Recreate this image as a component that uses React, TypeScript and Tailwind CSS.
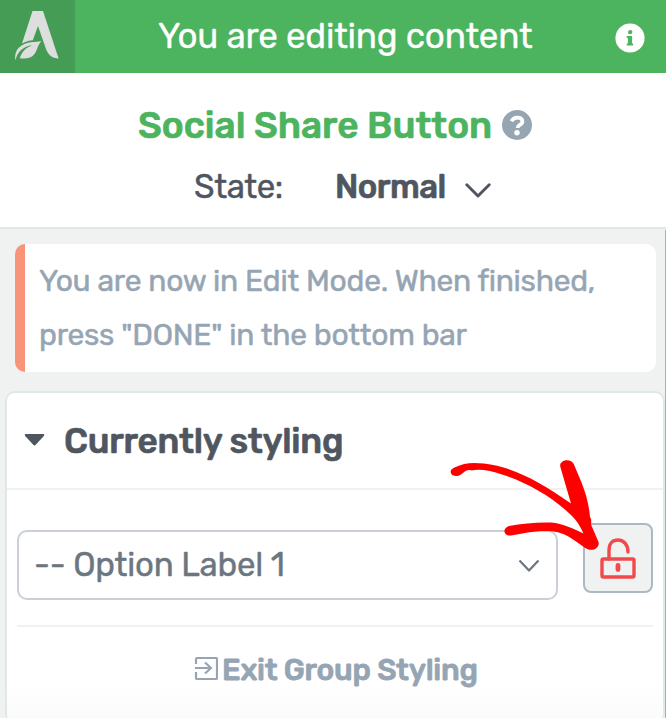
import React from "react";

function Logo() {
  return (
    <svg width="75" height="73" viewBox="0 0 75 73" fill="#dedede">
      <path d="M32.5 11H43L58.6 58.5C52 58.5 48 54.5 46 49L38 26L32.8 40.3C29 40.6 25.5 41.7 22 43.5Z" />
      <path d="M15.4 60.5C14 52 18 46.8 25 43.8C30.500 41.500 36 42.500 41.500 41C37.500 45 37.500 50 34.500 54C31 58.500 26 59 19.800 58.200C22 51.500 26 47.500 32.500 45.200C23 46.200 17.500 51.500 15.400 60.500Z" />
    </svg>
  );
}

function Header() {
  return (
    <header className="flex h-[73px] items-center bg-[#4cb35e] text-white">
      <div className="h-[73px] w-[75px] shrink-0 bg-[#459d55]">
        <Logo />
      </div>
      <h1 className="ml-[83px] w-[457px] whitespace-nowrap text-[35px] font-[430] leading-[73px] tracking-[-0.24px] [-webkit-text-stroke:0.3px]">
        You are editing content
      </h1>
      <svg width="30" height="30" viewBox="0 0 30 30" className="mt-[3px] shrink-0">
        <circle cx="15" cy="15" r="14.6" fill="#fff" />
        <path
          fill="#4cb35e"
          d="M15.300 7Q17.600 7 17.400 9.100Q17.200 11.300 15 11.300Q12.900 11.300 13 9.200Q13.200 7 15.300 7ZM11.800 13H17.100V20.600H18.100V22.600H11.800V20.600H12.900V15H11.800Z"
        />
      </svg>
    </header>
  );
}

function TitleBar() {
  return (
    <section className="h-[156px] border-b-2 border-[#dee8e9] bg-white text-[#50565f]">
      <div className="flex items-center pl-[138px] pt-[31px]">
        <h2 className="w-[364px] whitespace-nowrap text-[37px] font-medium leading-[42px] text-[#4cb35e] [-webkit-text-stroke:0.7px]">
          Social Share Button
        </h2>
        <svg width="30" height="30" viewBox="0 0 30 30">
          <circle cx="15" cy="15" r="15" fill="#96a5b2" />
          <path d="M9.500 11.200C10.700 8.700 12.500 7.600 15.200 7.600C18.500 7.600 20.400 9.100 20.400 11.600C20.400 15.200 15.500 14.700 15.500 18" fill="none" stroke="#fff" strokeWidth="3.800" />
          <circle cx="15" cy="22.700" r="2.700" fill="#fff" />
        </svg>
      </div>
      <div className="flex items-center pl-[194px] pt-[20px] text-[33px] leading-[42px]">
        <span className="w-[141px] whitespace-nowrap font-[430] tracking-[-0.4px] [-webkit-text-stroke:0.4px]">State:</span>
        <span className="w-[130px] whitespace-nowrap font-medium tracking-[-0.55px] [-webkit-text-stroke:0.7px]">Normal</span>
        <svg width="26" height="16" viewBox="0 0 26 16" className="mt-[8px]">
          <path d="M1.800 1.800L13 13L24.200 1.800" fill="none" stroke="#4e5560" strokeWidth="2.900" strokeLinecap="round" strokeLinejoin="round" />
        </svg>
      </div>
    </section>
  );
}

function Notice() {
  return (
    <div className="ml-[15px] mt-[15px] h-[128px] w-[641px] overflow-hidden rounded-[10px] border-l-[10px] border-[#f79479] bg-white pl-[14px] pt-[10px] text-[30px] font-[430] leading-[54px] text-[#95a5b3] [-webkit-text-stroke:0.5px]">
      <p className="whitespace-nowrap tracking-[-0.25px]">You are now in Edit Mode. When finished,</p>
      <p className="whitespace-nowrap tracking-[-0.25px]">press "DONE" in the bottom bar</p>
    </div>
  );
}

function RedArrow() {
  return (
    <svg className="absolute left-[440px] top-[450px]" width="170" height="110" viewBox="0 0 170 110" fill="#f00">
      <path d="M14.500 17.500C24 13 31 12.300 44 13.500C73 17 99 31 131 53.500L120.500 17.500C118 10 131 7.500 134 14.500C142 34 148 45 150 67C152 70 151 72 151 74.500L158.500 92C160 98 152 103 144.500 97.500C132 88.500 124 81.500 108 81C94 80.500 84 83.500 71 85.500C64 86.500 61.500 78.500 69 76C83 73.500 97 72 111 72.500C123 73.500 134 79 143.500 83.500C140 76 137 71 132 66C113 47 86 32 62 24.500C51 21 40 18.500 31.500 20.500C27.500 19 25 21.500 21 24.500C12 29.500 6.500 20.500 14.500 17.500Z" />
    </svg>
  );
}

function StylingPanel() {
  return (
    <section className="ml-[5px] mt-[19px] h-[327px] w-[660px] rounded-t-[10px] rounded-b-[4px] border-2 border-b-0 border-[#dee8e9] bg-gradient-to-b from-white from-90% to-[#fbfbfb]">
      <div className="flex h-[97px] items-center border-b-2 border-[#f0f2f2] pl-[17px] text-[#50565f]">
        <svg width="21" height="12" viewBox="0 0 22 12" preserveAspectRatio="none" className="-mt-px">
          <path d="M1.500 0H20.500Q22 .6 20.800 2L12.300 10.800Q11 12 9.700 10.800L1.200 2Q0 .6 1.500 0Z" fill="#50565f" />
        </svg>
        <h3 className="ml-[19px] whitespace-nowrap text-[35px] font-medium leading-[42px] tracking-[-0.25px] [-webkit-text-stroke:0.7px]">
          Currently styling
        </h3>
      </div>
      <div className="ml-[10px] flex h-[137px] w-[636px] border-b-2 border-[#f0f2f2] pt-[33px]">
        <div className="mt-[7px] flex h-[70px] w-[541px] shrink-0 items-center justify-between rounded-[10px] border-2 border-[#cbd0d7] pl-[15px] pr-[16px] text-[33px] text-[#6c7681]">
          <span className="whitespace-nowrap font-[430] leading-[60px] tracking-[-0.25px] [-webkit-text-stroke:0.4px]">-- Option Label 1</span>
          <svg width="22" height="14" viewBox="0 0 22 14" className="mt-[2px]">
            <path d="M1.500 1.500L11 11.500L20.500 1.500" fill="none" stroke="#6c7681" strokeWidth="2.200" strokeLinejoin="round" />
          </svg>
        </div>
        <button className="ml-[25px] h-[70px] w-[70px] shrink-0 rounded-[8px] border-2 border-[#acb8c3] bg-[#f0f2f2]">
          <svg width="66" height="66" viewBox="0 0 66 66" fill="none" stroke="#f04a4d" strokeWidth="3.400">
            <rect x="17" y="34" width="32" height="18" rx="1.500" />
            <path d="M24 34V25C24 18 28 15 33 15C39 15 43 20 43 27" strokeLinecap="round" />
            <path d="M33 40.500V44.500" strokeWidth="4.800" strokeLinecap="round" />
          </svg>
        </button>
      </div>
      <div className="flex items-center pl-[187px] pt-[23px] text-[#95a5b3]">
        <svg width="24" height="24" viewBox="0 0 24 24" fill="none" stroke="#95a5b3" strokeWidth="2.200" className="-mt-[4px]">
          <path d="M2 8V3Q2 2 3 2H22Q23 2 23 3V22Q23 23 22 23H3Q2 23 2 22V16M1 12H17M11 6.500L17 12L11 17.500" />
        </svg>
        <span className="ml-[4px] whitespace-nowrap text-[30px] font-medium leading-[40px] tracking-[-0.28px] [-webkit-text-stroke:0.8px]">Exit Group Styling</span>
      </div>
    </section>
  );
}

export default function App() {
  return (
    <main className="relative h-[718px] w-[666px] overflow-hidden bg-[#f0f2f1] font-['Rubik','Roboto',sans-serif]">
      <Header />
      <TitleBar />
      <Notice />
      <StylingPanel />
      <RedArrow />
      <div className="absolute right-0 top-[230px] h-[488px] w-px bg-[#a9b0b0]" />
    </main>
  );
}
